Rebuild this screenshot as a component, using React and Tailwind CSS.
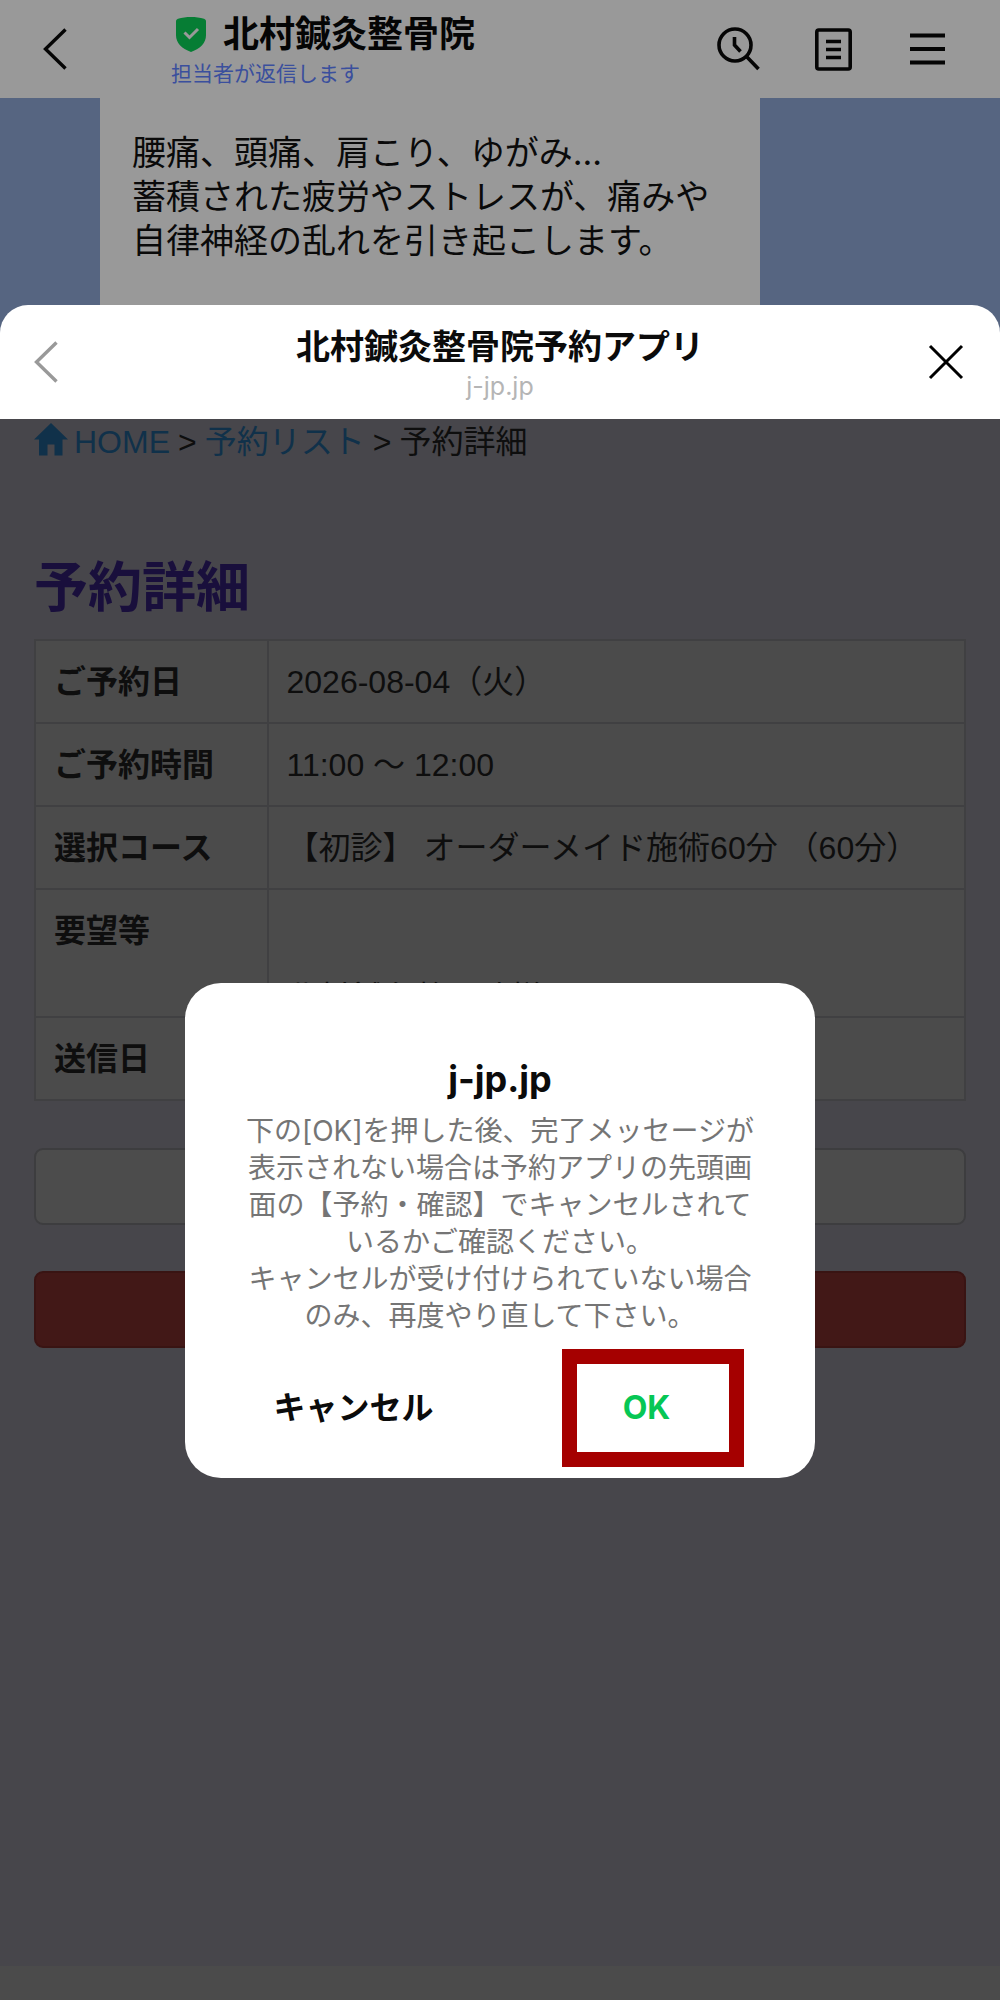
import React from 'react';
import clsx from 'clsx';

const rows = [
  { label: 'ご予約日', value: '2026-08-04（火）' },
  { label: 'ご予約時間', value: '11:00 〜 12:00' },
  { label: '選択コース', value: '【初診】 オーダーメイド施術60分 （60分）' },
  { label: '要望等', value: '北村鍼灸整骨院様', tall: true },
  { label: '送信日', value: '' },
];

const BackIcon = () => (
  <svg viewBox="0 0 24 42" className="w-6 h-[42px]" fill="none" stroke="currentColor" strokeWidth="3.4">
    <path d="M22.5 1.5 2.5 21l20 19.5" />
  </svg>
);

const ShieldIcon = () => (
  <svg viewBox="0 0 30 35" className="w-[30px] h-[35px] shrink-0">
    <path d="M15 0c4.500 0 9 .6 13 1.800 1.200.400 2 1.300 2 2.600V18c0 8-5.500 13.500-15 17C5.500 31.500 0 26 0 18V4.400c0-1.300.800-2.200 2-2.600C6 .6 10.500 0 15 0Z" fill="#067d34" />
    <path d="m8.500 15.500 5 5 8.500-8.500" fill="none" stroke="#999" strokeWidth="3" />
  </svg>
);

const SearchHistoryIcon = () => (
  <svg viewBox="0 0 44 44" className="size-11" fill="none" stroke="currentColor" strokeWidth="3.6">
    <circle cx="18" cy="18" r="16" />
    <path d="M17.500 10v8l6 6.500M29.500 29.500l12 12.500" />
  </svg>
);

const NoteIcon = () => (
  <svg viewBox="0 0 37 43" className="w-[37px] h-[43px]" fill="none" stroke="currentColor" strokeWidth="3.6">
    <rect x="1.800" y="2" width="33.400" height="39" rx="2" />
    <path d="M11 13.500h15M11 21.500h15M11 29.500h15" />
  </svg>
);

const MenuIcon = () => (
  <svg viewBox="0 0 35 32" className="w-[35px] h-8" fill="none" stroke="currentColor" strokeWidth="3.8">
    <path d="M0 2.500h35M0 16h35M0 29.500h35" />
  </svg>
);

const CloseIcon = () => (
  <svg viewBox="0 0 36 36" className="size-9" fill="none" stroke="currentColor" strokeWidth="3">
    <path d="m2 2 32 32M34 2 2 34" />
  </svg>
);

const HomeIcon = () => (
  <svg viewBox="0 0 34 33" className="w-[34px] h-[33px] mt-[3px]" fill="currentColor">
    <path d="M17 0 34 16.500h-5.500V32.500h-8V21.500h-7V32.500h-8.500V16.500H0Z" />
  </svg>
);

const ChatHeader = () => (
  <header className="flex items-center h-[98px] pl-[43px] pr-[55px] bg-[#999999] text-[#050505]">
    <button type="button" aria-label="戻る">
      <BackIcon />
    </button>
    <div className="flex-1 ml-[104px] pt-[2px]">
      <div className="flex items-center gap-[17px] pl-[5px]">
        <ShieldIcon />
        <h1 className="text-[36px] leading-[48px] font-bold">北村鍼灸整骨院</h1>
      </div>
      <p className="text-[21px] leading-8 text-[#3a4f9d]">担当者が返信します</p>
    </div>
    <nav className="flex items-center">
      <button type="button" aria-label="検索">
        <SearchHistoryIcon />
      </button>
      <button type="button" aria-label="ノート" className="ml-[54px]">
        <NoteIcon />
      </button>
      <button type="button" aria-label="メニュー" className="ml-[58px]">
        <MenuIcon />
      </button>
    </nav>
  </header>
);

const ConfirmDialog = () => (
  <div
    role="dialog"
    aria-labelledby="dialog-title"
    className="w-[63%] h-[495px] pt-[74px] flex flex-col bg-white rounded-[36px]"
  >
    <h2 id="dialog-title" className="text-center text-[36px] leading-[44px] font-bold text-[#0b0b0b]">
      j-jp.jp
    </h2>
    <p className="mt-3 text-center text-[28px] leading-[37px] text-[#757575] whitespace-nowrap">
      下の[OK]を押した後、完了メッセージが<br />
      表示されない場合は予約アプリの先頭画<br />
      面の【予約・確認】でキャンセルされて<br />
      いるかご確認ください。<br />
      キャンセルが受け付けられていない場合<br />
      のみ、再度やり直して下さい。
    </p>
    <div className="grid grid-cols-2 mt-[14px] px-[22px] text-[32px] font-bold">
      <button type="button" className="h-[118px] text-[#0b0b0b]">キャンセル</button>
      <div className="relative">
        <button type="button" className="w-full h-[118px] text-[#06c755]">OK</button>
        {/* Highlight frame around OK */}
        <span className="absolute top-0 left-[62px] w-[182px] h-[118px] border-[15px] border-[#a50000] pointer-events-none" />
      </div>
    </div>
  </div>
);

const ReservationSheet = () => (
  <section className="relative flex flex-col flex-1 -mt-9">
    <header className="flex items-center justify-between h-[114px] px-[34px] bg-white rounded-t-[28px]">
      <button type="button" aria-label="戻る" className="w-10 text-[#999999]">
        <BackIcon />
      </button>
      <div className="pt-[3px] text-center">
        <h2 className="text-[34px] leading-[44px] font-bold text-[#0b0b0b]">北村鍼灸整骨院予約アプリ</h2>
        <p className="text-[25px] leading-[34px] text-[#b5b5b5]">j-jp.jp</p>
      </div>
      <button type="button" aria-label="閉じる" className="flex justify-center w-10 text-black">
        <CloseIcon />
      </button>
    </header>

    <main className="relative flex-1 px-[34px] pt-px bg-[#47464b] text-[#0e0e0e] font-['Liberation_Sans','Noto_Sans_CJK_JP',sans-serif] text-[32px] leading-[44px]">
      <nav className="flex items-start gap-2">
        <a href="#home" className="flex items-start gap-[6px] text-[#10314a]">
          <HomeIcon />
          HOME
        </a>
        <span>&gt;</span>
        <a href="#list" className="text-[#10314a]">予約リスト</a>
        <span>&gt;</span>
        <span>予約詳細</span>
      </nav>

      <h1 className="mt-[88px] text-[54px] leading-[72px] font-bold text-[#190f3c]">予約詳細</h1>

      <table className="w-full mt-[15px] border-collapse bg-[#4b4b4b]">
        <tbody>
          {rows.map((row) => (
            <tr key={row.label} className={clsx('align-top', row.tall ? 'h-32' : 'h-[83px]')}>
              <th scope="row" className="w-[25%] px-[18px] pt-[19px] text-left font-bold border-2 border-[#404042]">
                {row.label}
              </th>
              <td className={clsx('px-[18px] border-2 border-[#404042]', row.tall ? 'align-bottom leading-9' : 'pt-[19px]')}>
                {row.value}
              </td>
            </tr>
          ))}
        </tbody>
      </table>

      <button type="button" aria-label="予約リストへ" className="block w-full h-[77px] mt-[47px] rounded-[9px] border-2 border-[#3d3d3f] bg-[#4c4c4c]" />
      <button type="button" aria-label="予約をキャンセル" className="block w-full h-[77px] mt-[46px] rounded-[9px] border-2 border-[#391413] bg-[#421817]" />

      {/* Confirm overlay */}
      <div className="absolute inset-0 flex items-start justify-center pt-[564px] font-['Inter','Noto_Sans_CJK_JP',sans-serif]">
        <ConfirmDialog />
      </div>
    </main>

    <footer className="h-[34px] bg-[#4b4b4b]" />
  </section>
);

const App = () => (
  <div lang="ja" className="min-h-screen flex flex-col bg-[#566581] font-['Inter','Noto_Sans_CJK_JP',sans-serif]">
    <ChatHeader />
    <div className="h-[243px] ml-[10%] w-[66%] px-8 pt-[33px] bg-[#999999] text-[34px] leading-[44px] text-[#0a0a0a]">
      <p className="whitespace-nowrap">
        腰痛、頭痛、肩こり、ゆがみ...<br />
        蓄積された疲労やストレスが、痛みや<br />
        自律神経の乱れを引き起こします。
      </p>
    </div>
    <ReservationSheet />
  </div>
);

export default App;
